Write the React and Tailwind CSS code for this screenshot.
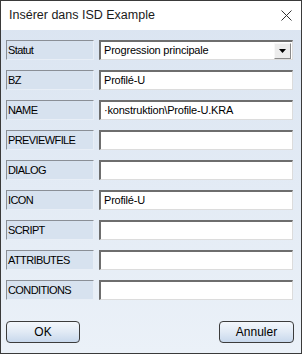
import React from 'react';

const rows = [
    { label: 'Statut', value: 'Progression principale', select: true },
    { label: 'BZ', value: 'Profilé-U' },
    { label: 'NAME', value: '·konstruktion\\Profile-U.KRA' },
    { label: 'PREVIEWFILE', value: '' },
    { label: 'DIALOG', value: '' },
    { label: 'ICON', value: 'Profilé-U' },
    { label: 'SCRIPT', value: '' },
    { label: 'ATTRIBUTES', value: '' },
    { label: 'CONDITIONS', value: '' },
];

const font = { fontFamily: '"Liberation Sans", Arial, sans-serif' };

function Field({ label, value, select }) {
    return (
        <div className="flex items-center h-[20px] gap-[5px]">
            <div className="w-[88px] h-full flex items-center pl-[1px] border border-t-[#8a8f96] border-l-[#8a8f96] border-b-[#e8eef6] border-r-[#e8eef6] bg-[#d7e2ef] text-[11px] tracking-[-0.6px] text-black">
                {label}
            </div>
            <div className="w-[194px] h-full flex items-center bg-white border-t-2 border-l-2 border-b border-r border-t-[#6e6e6e] border-l-[#6e6e6e] border-b-[#dcdcdc] border-r-[#dcdcdc] pl-[3px] text-[11px] tracking-[-0.2px] text-black">
                <span className="flex-1 whitespace-nowrap overflow-hidden">{value}</span>
                {select && (
                    <div className="w-[17px] h-[16px] mr-[1px] flex items-center justify-center bg-[#ececec] border border-t-[#f8f8f8] border-l-[#f8f8f8] border-b-[#8a8a8a] border-r-[#8a8a8a]">
                        <svg width="7" height="4" viewBox="0 0 7 4">
                            <polygon points="0,0 7,0 3.5,4" fill="#000" />
                        </svg>
                    </div>
                )}
            </div>
        </div>
    );
}

function Button({ children, className }) {
    return (
        <button className={`h-[22px] rounded-[4px] border border-[#3c3c3c] bg-gradient-to-b from-[#f3f7fc] via-[#e1eaf5] to-[#c8d8ec] text-[12px] text-black ${className}`}>
            {children}
        </button>
    );
}

export default function App() {
    return (
        <div className="w-[302px] h-[354px] border border-[#3a3a3a] flex flex-col bg-gradient-to-b from-[#dae4f1] to-[#ebf1f8] overflow-hidden" style={font}>
            <div className="h-[29px] bg-white flex items-center justify-between pl-[8px] pr-[8px] shrink-0">
                <span className="text-[12.5px] text-[#1a1a1a]">Insérer dans ISD Example</span>
                <svg width="11" height="11" viewBox="0 0 11 11" className="mr-[1px]">
                    <path d="M0.5 0.5 L10.5 10.5 M10.5 0.5 L0.5 10.5" stroke="#333" strokeWidth="1" />
                </svg>
            </div>

            <div className="flex flex-col gap-[10px] pl-[5px] pt-[10px]">
                {rows.map((r) => (
                    <Field key={r.label} {...r} />
                ))}
            </div>

            <div className="flex justify-between pl-[5px] pr-[7px] mt-[21px]">
                <Button className="w-[74px]">OK</Button>
                <Button className="w-[75px]">Annuler</Button>
            </div>
        </div>
    );
}
